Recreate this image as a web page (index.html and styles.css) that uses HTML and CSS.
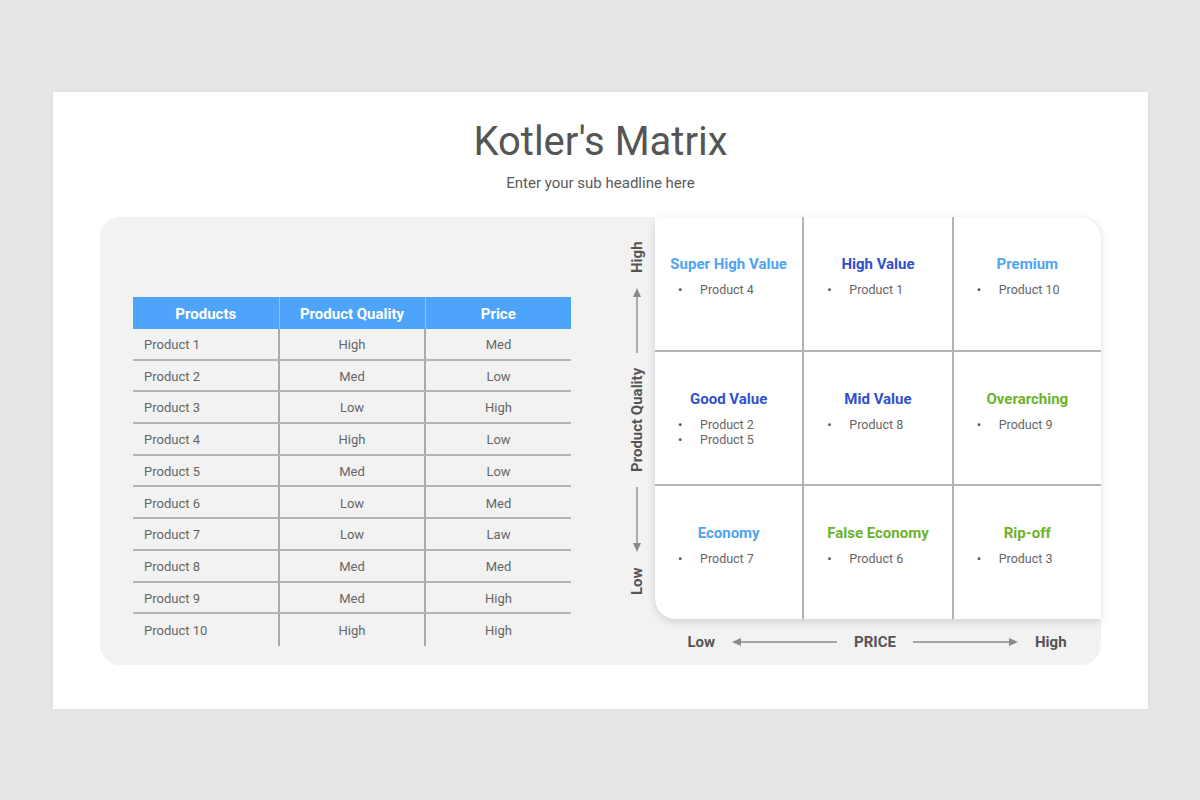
FILE: index.html
```html
<!DOCTYPE html>
<html>
<head>
<meta charset="utf-8">
<link rel="stylesheet" href="styles.css">
</head>
<body>
<div class="slide">
  <h1 class="title">Kotler's Matrix</h1>
  <p class="subtitle">Enter your sub headline here</p>
  <div class="panel">
    <div class="table-wrap">
      <table class="tbl">
        <thead>
          <tr><th>Products</th><th>Product Quality</th><th>Price</th></tr>
        </thead>
        <tbody>
          <tr><td>Product 1</td><td>High</td><td>Med</td></tr>
          <tr><td>Product 2</td><td>Med</td><td>Low</td></tr>
          <tr><td>Product 3</td><td>Low</td><td>High</td></tr>
          <tr><td>Product 4</td><td>High</td><td>Low</td></tr>
          <tr><td>Product 5</td><td>Med</td><td>Low</td></tr>
          <tr><td>Product 6</td><td>Low</td><td>Med</td></tr>
          <tr><td>Product 7</td><td>Low</td><td>Law</td></tr>
          <tr><td>Product 8</td><td>Med</td><td>Med</td></tr>
          <tr><td>Product 9</td><td>Med</td><td>High</td></tr>
          <tr><td>Product 10</td><td>High</td><td>High</td></tr>
        </tbody>
      </table>
    </div>
    <div class="v-axis">
      <span class="axis-label">Low</span>
      <svg class="v-arrow" width="10" height="65" viewBox="0 0 10 65"><polygon points="5,0 1,9 9,9" fill="#8a8a8a"/><line x1="5" y1="8" x2="5" y2="65" stroke="#8a8a8a" stroke-width="1.4"/></svg>
      <span class="axis-label">Product Quality</span>
      <svg class="v-arrow" width="10" height="65" viewBox="0 0 10 65"><line x1="5" y1="0" x2="5" y2="57" stroke="#8a8a8a" stroke-width="1.4"/><polygon points="5,65 1,56 9,56" fill="#8a8a8a"/></svg>
      <span class="axis-label">High</span>
    </div>
    <div class="matrix-col">
      <div class="matrix">
        <div class="cell"><div class="cell-title light">Super High Value</div><ul class="items"><li>Product 4</li></ul></div>
        <div class="cell"><div class="cell-title dark">High Value</div><ul class="items"><li>Product 1</li></ul></div>
        <div class="cell"><div class="cell-title light">Premium</div><ul class="items"><li>Product 10</li></ul></div>
        <div class="cell"><div class="cell-title dark">Good Value</div><ul class="items"><li>Product 2</li><li>Product 5</li></ul></div>
        <div class="cell"><div class="cell-title dark">Mid Value</div><ul class="items"><li>Product 8</li></ul></div>
        <div class="cell"><div class="cell-title green">Overarching</div><ul class="items"><li>Product 9</li></ul></div>
        <div class="cell"><div class="cell-title light">Economy</div><ul class="items"><li>Product 7</li></ul></div>
        <div class="cell"><div class="cell-title green">False Economy</div><ul class="items"><li>Product 6</li></ul></div>
        <div class="cell"><div class="cell-title green">Rip-off</div><ul class="items"><li>Product 3</li></ul></div>
      </div>
      <div class="h-axis">
        <span class="axis-label">Low</span>
        <svg class="h-arrow" width="105" height="10" viewBox="0 0 105 10"><polygon points="0,5 9,1 9,9" fill="#8a8a8a"/><line x1="8" y1="5" x2="105" y2="5" stroke="#8a8a8a" stroke-width="1.4"/></svg>
        <span class="axis-label">PRICE</span>
        <svg class="h-arrow" width="105" height="10" viewBox="0 0 105 10"><line x1="0" y1="5" x2="97" y2="5" stroke="#8a8a8a" stroke-width="1.4"/><polygon points="105,5 96,1 96,9" fill="#8a8a8a"/></svg>
        <span class="axis-label">High</span>
      </div>
    </div>
  </div>
</div>
</body>
</html>
```

FILE: styles.css
```css
html, body {
  margin: 0;
  padding: 0;
}
body {
  background: #e8e6e7;
  font-family: Roboto, "Liberation Sans", Arial, sans-serif;
  padding: 92px 0 0 53px;
  height: 800px;
  box-sizing: border-box;
}
.slide {
  width: 1095px;
  height: 617px;
  background: #ffffff;
  box-shadow: 0 0 6px rgba(0, 0, 0, 0.06);
  box-sizing: border-box;
  padding-top: 118px;
  position: relative;
}
.title {
  position: absolute;
  left: 0;
  right: 0;
  top: 24px;
  margin: 0;
  text-align: center;
  font-size: 40px;
  font-weight: 400;
  color: #555555;
  line-height: 52px;
}
.subtitle {
  position: absolute;
  left: 0;
  right: 0;
  top: 81px;
  margin: 0;
  text-align: center;
  font-size: 15px;
  color: #5a5a5a;
  line-height: 20px;
}
.panel {
  margin: 7px 0 0 47px;
  width: 1001px;
  height: 448px;
  background: #f2f2f2;
  border-radius: 20px;
  display: flex;
}
.table-wrap {
  width: 519px;
  box-sizing: border-box;
  padding: 80px 0 0 33px;
}
.tbl {
  width: 438px;
  border-collapse: collapse;
  table-layout: fixed;
}
.tbl th {
  background: #4ea4fa;
  color: #ffffff;
  font-size: 15px;
  font-weight: 700;
  height: 32px;
  padding: 1px 0 0 0;
  box-sizing: border-box;
  border-left: 1px solid #8cc4f8;
}
.tbl th:first-child {
  border-left: none;
}
.tbl td {
  height: 28.2px;
  padding: 1.5px 0 0 0;
  font-size: 13px;
  color: #666666;
  text-align: center;
  border-left: 2px solid #aaaaaa;
  border-bottom: 2px solid #b4b4b4;
}
.tbl td:first-child {
  border-left: none;
  text-align: left;
  padding-left: 11px;
}
.tbl tbody tr:last-child td {
  border-bottom: none;
  height: 30.5px;
}
.v-axis {
  width: 36px;
  height: 402px;
  display: flex;
  align-items: center;
  justify-content: center;
  gap: 15px;
  writing-mode: vertical-rl;
  transform: rotate(180deg);
}
.axis-label {
  font-size: 15px;
  font-weight: 700;
  color: #555555;
  line-height: 18px;
  white-space: nowrap;
}
.v-arrow, .h-arrow {
  display: block;
  flex: none;
}
.matrix-col {
  width: 446px;
  display: flex;
  flex-direction: column;
}
.matrix {
  width: 446px;
  height: 402px;
  display: grid;
  grid-template-columns: 1fr 1fr 1fr;
  grid-template-rows: 1fr 1fr 1fr;
  gap: 2px;
  background: #b3b3b3;
  border-radius: 0 20px 0 20px;
  overflow: hidden;
  box-shadow: 0 3px 9px rgba(0, 0, 0, 0.13);
}
.cell {
  background: #ffffff;
  padding: 38px 0 0 0;
  box-sizing: border-box;
}
.cell-title {
  text-align: center;
  font-size: 15px;
  font-weight: 700;
  line-height: 18px;
  margin-bottom: 9px;
}
.light { color: #4ea4f4; }
.dark { color: #3150cf; }
.green { color: #6cb22c; }
.items {
  list-style: none;
  margin: 0;
  padding: 0 0 0 23px;
}
.items li {
  font-size: 12.5px;
  color: #666666;
  line-height: 15px;
  display: flex;
}
.items li::before {
  content: "•";
  width: 22px;
  flex: none;
  font-size: 13px;
  color: #555555;
}
.h-axis {
  flex: 1;
  display: flex;
  align-items: center;
  justify-content: center;
  gap: 17px;
  padding-right: 2px;
}
```
